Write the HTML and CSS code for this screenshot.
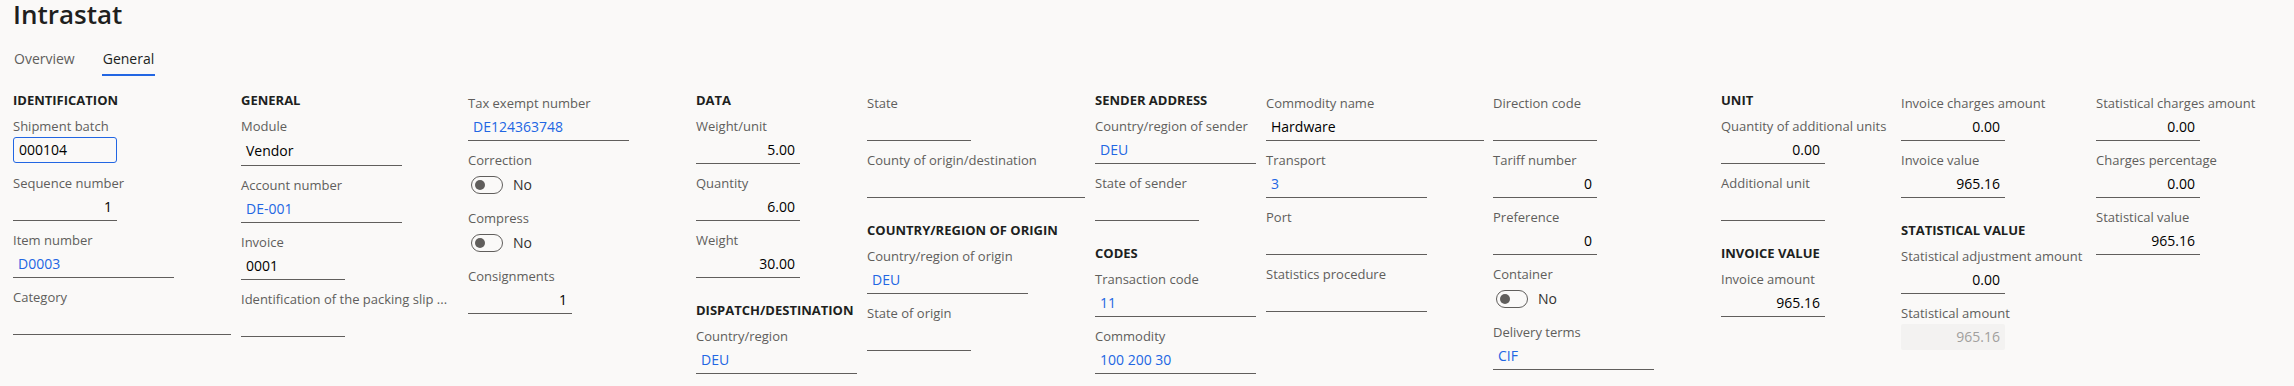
FILE: index.html
```html
<!DOCTYPE html>
<html lang="en">
<head>
  <meta charset="UTF-8" />
  <title>Intrastat</title>
  <link rel="stylesheet" href="styles.css">
</head>
<body>
  <h1 class="page-title">Intrastat</h1>

  <nav class="tabs">
    <span class="tab">Overview</span>
    <span class="tab tab-active">General</span>
  </nav>

  <main class="form-grid">
    <!-- Identification -->
    <section class="col">
      <h2 class="group-title">Identification</h2>
      <div class="field">
        <div class="field-label">Shipment batch</div>
        <div class="input w-xs is-focused">000104</div>
      </div>
      <div class="field">
        <div class="field-label">Sequence number</div>
        <div class="input w-xs num">1</div>
      </div>
      <div class="field">
        <div class="field-label">Item number</div>
        <div class="input w-sm link">D0003</div>
      </div>
      <div class="field">
        <div class="field-label">Category</div>
        <div class="input w-md"></div>
      </div>
    </section>

    <!-- General -->
    <section class="col">
      <h2 class="group-title">General</h2>
      <div class="field">
        <div class="field-label">Module</div>
        <div class="input w-sm is-combo">Vendor</div>
      </div>
      <div class="field">
        <div class="field-label">Account number</div>
        <div class="input w-sm link">DE-001</div>
      </div>
      <div class="field">
        <div class="field-label">Invoice</div>
        <div class="input w-xs">0001</div>
      </div>
      <div class="field">
        <div class="field-label">Identification of the packing slip ...</div>
        <div class="input w-xs"></div>
      </div>
    </section>

    <section class="col col-cont">
      <div class="field">
        <div class="field-label">Tax exempt number</div>
        <div class="input w-sm link">DE124363748</div>
      </div>
      <div class="field">
        <div class="field-label">Correction</div>
        <div class="toggle-row"><span class="toggle"></span><span class="toggle-text">No</span></div>
      </div>
      <div class="field">
        <div class="field-label">Compress</div>
        <div class="toggle-row"><span class="toggle"></span><span class="toggle-text">No</span></div>
      </div>
      <div class="field">
        <div class="field-label">Consignments</div>
        <div class="input w-xs num">1</div>
      </div>
    </section>

    <!-- Data / dispatch -->
    <section class="col">
      <h2 class="group-title">Data</h2>
      <div class="field">
        <div class="field-label">Weight/unit</div>
        <div class="input w-xs num">5.00</div>
      </div>
      <div class="field">
        <div class="field-label">Quantity</div>
        <div class="input w-xs num">6.00</div>
      </div>
      <div class="field">
        <div class="field-label">Weight</div>
        <div class="input w-xs num">30.00</div>
      </div>
      <h2 class="group-title">Dispatch/destination</h2>
      <div class="field">
        <div class="field-label">Country/region</div>
        <div class="input w-sm link">DEU</div>
      </div>
    </section>

    <section class="col col-cont">
      <div class="field">
        <div class="field-label">State</div>
        <div class="input w-xs"></div>
      </div>
      <div class="field">
        <div class="field-label">County of origin/destination</div>
        <div class="input w-md"></div>
      </div>
      <h2 class="group-title">Country/region of origin</h2>
      <div class="field">
        <div class="field-label">Country/region of origin</div>
        <div class="input w-sm link">DEU</div>
      </div>
      <div class="field">
        <div class="field-label">State of origin</div>
        <div class="input w-xs"></div>
      </div>
    </section>

    <!-- Sender / codes -->
    <section class="col">
      <h2 class="group-title">Sender address</h2>
      <div class="field">
        <div class="field-label">Country/region of sender</div>
        <div class="input w-sm link">DEU</div>
      </div>
      <div class="field">
        <div class="field-label">State of sender</div>
        <div class="input w-xs"></div>
      </div>
      <h2 class="group-title">Codes</h2>
      <div class="field">
        <div class="field-label">Transaction code</div>
        <div class="input w-sm link">11</div>
      </div>
      <div class="field">
        <div class="field-label">Commodity</div>
        <div class="input w-sm link">100 200 30</div>
      </div>
    </section>

    <section class="col col-cont">
      <div class="field">
        <div class="field-label">Commodity name</div>
        <div class="input w-md">Hardware</div>
      </div>
      <div class="field">
        <div class="field-label">Transport</div>
        <div class="input w-sm link">3</div>
      </div>
      <div class="field">
        <div class="field-label">Port</div>
        <div class="input w-sm"></div>
      </div>
      <div class="field">
        <div class="field-label">Statistics procedure</div>
        <div class="input w-sm"></div>
      </div>
    </section>

    <section class="col col-cont">
      <div class="field">
        <div class="field-label">Direction code</div>
        <div class="input w-xs"></div>
      </div>
      <div class="field">
        <div class="field-label">Tariff number</div>
        <div class="input w-xs num">0</div>
      </div>
      <div class="field">
        <div class="field-label">Preference</div>
        <div class="input w-xs num">0</div>
      </div>
      <div class="field">
        <div class="field-label">Container</div>
        <div class="toggle-row"><span class="toggle"></span><span class="toggle-text">No</span></div>
      </div>
      <div class="field">
        <div class="field-label">Delivery terms</div>
        <div class="input w-sm link">CIF</div>
      </div>
    </section>

    <!-- Amounts -->
    <section class="col">
      <h2 class="group-title">Unit</h2>
      <div class="field">
        <div class="field-label">Quantity of additional units</div>
        <div class="input w-xs num">0.00</div>
      </div>
      <div class="field">
        <div class="field-label">Additional unit</div>
        <div class="input w-xs"></div>
      </div>
      <h2 class="group-title">Invoice value</h2>
      <div class="field">
        <div class="field-label">Invoice amount</div>
        <div class="input w-xs num">965.16</div>
      </div>
    </section>

    <section class="col col-cont">
      <div class="field">
        <div class="field-label">Invoice charges amount</div>
        <div class="input w-xs num">0.00</div>
      </div>
      <div class="field">
        <div class="field-label">Invoice value</div>
        <div class="input w-xs num">965.16</div>
      </div>
      <h2 class="group-title">Statistical value</h2>
      <div class="field">
        <div class="field-label">Statistical adjustment amount</div>
        <div class="input w-xs num">0.00</div>
      </div>
      <div class="field">
        <div class="field-label">Statistical amount</div>
        <div class="input w-xs num is-disabled">965.16</div>
      </div>
    </section>

    <section class="col col-cont">
      <div class="field">
        <div class="field-label">Statistical charges amount</div>
        <div class="input w-xs num">0.00</div>
      </div>
      <div class="field">
        <div class="field-label">Charges percentage</div>
        <div class="input w-xs num">0.00</div>
      </div>
      <div class="field">
        <div class="field-label">Statistical value</div>
        <div class="input w-xs num">965.16</div>
      </div>
    </section>
  </main>
</body>
</html>
```

FILE: styles.css
```css
body {
  margin: 0;
  padding: 0 13px;
  background-color: #faf9f8;
  font-family: "Open Sans", "Noto Sans", sans-serif;
  color: #201f1e;
}

.page-title {
  margin: 0;
  font-size: 26px;
  font-weight: 600;
  line-height: 28px;
  color: #201f1e;
}

.tabs {
  display: flex;
  gap: 26px;
  margin-top: 21px;
}
.tab {
  padding: 0 1px 5px;
  font-size: 14px;
  line-height: 20px;
  color: #605e5c;
  border-bottom: 2px solid transparent;
}
.tab-active {
  color: #201f1e;
  border-bottom-color: #2266e3;
}

.form-grid {
  display: grid;
  grid-template-columns: 228px 227px 228px 171px 228px 171px 227px 228px 180px 195px 1fr;
  margin-top: 14px;
}
.col {
  display: flex;
  flex-direction: column;
  align-items: flex-start;
  min-width: 0;
}
.col-cont {
  padding-top: 3px;
}

.group-title {
  margin: 0 0 6px;
  font-size: 13px;
  font-weight: 700;
  line-height: 20px;
  text-transform: uppercase;
  color: #201f1e;
}
.field + .group-title {
  margin-top: 13px;
}

.field {
  margin-bottom: 9px;
}
.field-label {
  font-size: 13px;
  line-height: 20px;
  color: #605e5c;
  white-space: nowrap;
}

.input {
  box-sizing: border-box;
  height: 28px;
  padding: 0 5px;
  font-size: 14px;
  line-height: 27px;
  color: #000;
  border-bottom: 1px solid #605e5c;
  white-space: nowrap;
}
.w-xs { width: 104px; }
.w-sm { width: 161px; }
.w-md { width: 218px; }
.num { text-align: right; }
.link { color: #2266e3; }

.is-combo {
  height: 30px;
  line-height: 29px;
}
.is-focused {
  height: 26px;
  margin: 1px 0;
  line-height: 24px;
  border: 1px solid #2266e3;
  border-radius: 3px;
}
.is-disabled {
  height: 26px;
  margin-top: 1px;
  line-height: 26px;
  color: #a19f9d;
  background-color: #f3f2f1;
  border: none;
  border-radius: 2px;
}

.toggle-row {
  display: flex;
  align-items: center;
  gap: 10px;
  height: 29px;
  padding-left: 3px;
}
.toggle {
  position: relative;
  box-sizing: border-box;
  width: 32px;
  height: 18px;
  border: 1px solid #605e5c;
  border-radius: 9px;
}
.toggle::after {
  content: "";
  position: absolute;
  left: 3px;
  top: 3px;
  width: 10px;
  height: 10px;
  border-radius: 50%;
  background-color: #605e5c;
}
.toggle-text {
  font-size: 14px;
  color: #323130;
}
```
